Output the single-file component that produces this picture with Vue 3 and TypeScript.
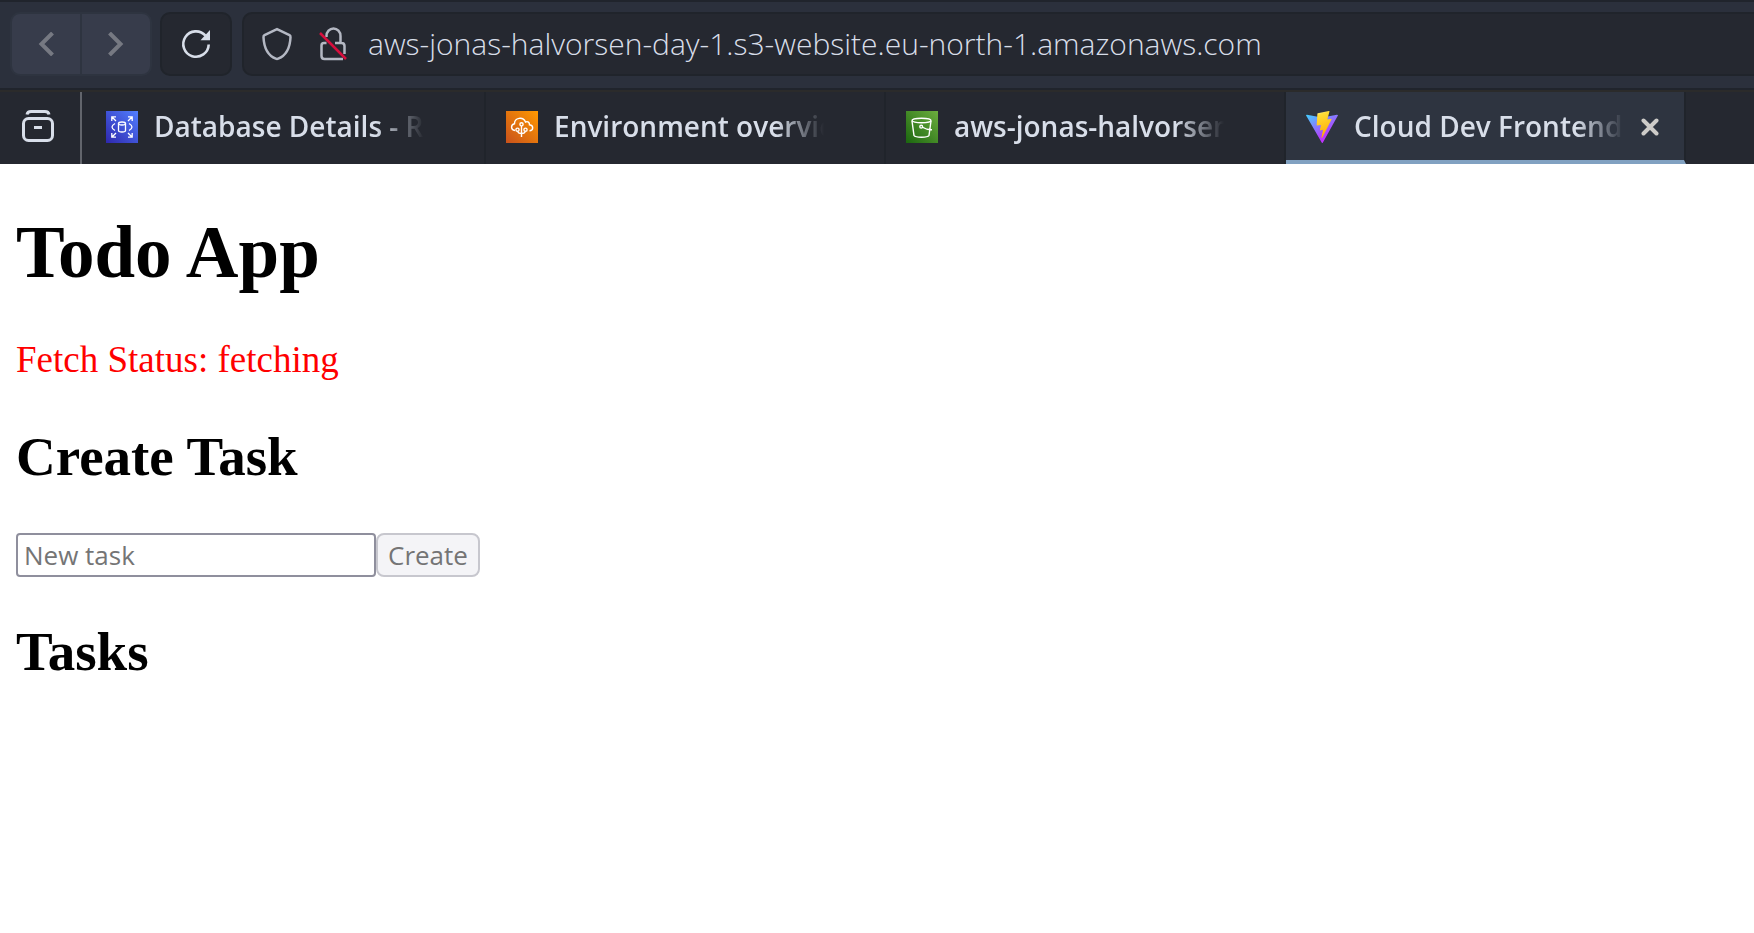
<script setup lang="ts">
import { ref } from 'vue'

interface Tab {
  id: string
  title: string
}

const tabs: Tab[] = [
  { id: 'database', title: 'Database Details - RDS' },
  { id: 'environment', title: 'Environment overview' },
  { id: 'bucket', title: 'aws-jonas-halvorsen' },
  { id: 'frontend', title: 'Cloud Dev Frontend' },
]

const activeTab = ref('frontend')
const address = ref('aws-jonas-halvorsen-day-1.s3-website.eu-north-1.amazonaws.com')
const newTask = ref('')
const fetchStatus = ref('fetching')
</script>

<template>
  <div class="browser">
    <header class="toolbar">
      <div class="history">
        <button type="button" class="history-button" aria-label="Back" disabled>
          <svg width="16" height="24" viewBox="0 0 16 24"><path d="M14.500 1 3.500 12l11 11" /></svg>
        </button>
        <button type="button" class="history-button" aria-label="Forward" disabled>
          <svg width="16" height="24" viewBox="0 0 16 24"><path d="m1.500 1 11 11-11 11" /></svg>
        </button>
      </div>
      <button type="button" class="reload" aria-label="Reload">
        <svg width="32" height="32" viewBox="0 0 32 32">
          <path d="M28.700 16.500A12.700 12.700 0 1 1 25.500 7.600" fill="none" stroke="#d8dee9" stroke-width="2.600" />
          <path d="M30 2v10.300h-9.500z" fill="#d8dee9" />
        </svg>
      </button>
      <div class="address-bar">
        <svg class="shield" width="32" height="34" viewBox="0 0 32 34">
          <path d="M16 2.200 28.500 8.200Q29.600 8.800 29.500 10.200C29 21 25 28.500 17.200 31.700Q16 32.200 14.800 31.700C7 28.500 3 21 2.500 10.200Q2.400 8.800 3.500 8.200Z" />
        </svg>
        <svg class="lock" width="30" height="34" viewBox="0 0 30 34">
          <path d="M8.500 10v-1a6.500 7 0 0 1 14 0v7M17 16h6.500q3 0 3 3v8M8.500 16H6q-2.500 0-2.500 2.500V29q0 3 3 3H25" />
          <path class="slash" d="m2 6 26 26" />
        </svg>
        <input v-model="address" class="address" type="text" aria-label="Address" spellcheck="false" />
      </div>
    </header>

    <nav class="tab-bar" aria-label="Open tabs">
      <button type="button" class="recent" aria-label="Recent tabs">
        <svg width="36" height="36" viewBox="0 0 36 36" fill="none" stroke="#d8dee9" stroke-width="3">
          <path d="M7 6.500q.5-3 4-3h14q3.500 0 4 3" />
          <rect x="3.500" y="10.500" width="29" height="22" rx="5" />
          <path d="M14 19.500h8" />
        </svg>
      </button>
      <div v-for="tab in tabs" :key="tab.id" class="tab" :class="{ active: tab.id === activeTab }">
        <button type="button" class="tab-button" @click="activeTab = tab.id">
          <svg v-if="tab.id === 'database'" class="favicon" viewBox="0 0 32 32">
            <defs>
              <linearGradient id="blue" x1="0" y1="1" x2="1" y2="0">
                <stop offset="0" stop-color="#2e27ad" /><stop offset="1" stop-color="#527fff" />
              </linearGradient>
            </defs>
            <path d="M0 0h32v32H0z" fill="url(#blue)" />
            <g fill="none" stroke="#fff" stroke-width="1.300">
              <ellipse cx="16" cy="12.500" rx="3.500" ry="1.500" />
              <path d="M12.500 12.500v7c0 2 7 2 7 0v-7M9 12.500q-6 3.500 0 7M23 12.500q6 3.500 0 7M5.800 10V5.800H10M6 6l4 4M22 5.800h4.200V10M26 6l-4 4M5.800 22v4.200H10M6 26l4-4M22 26.200h4.200V22M26 26l-4-4" />
            </g>
          </svg>
          <svg v-else-if="tab.id === 'environment'" class="favicon" viewBox="0 0 32 32">
            <defs>
              <linearGradient id="orange" x1="0" y1="1" x2="1" y2="0">
                <stop offset="0" stop-color="#c8511b" /><stop offset="1" stop-color="#ff9900" />
              </linearGradient>
            </defs>
            <path d="M0 0h32v32H0z" fill="url(#orange)" />
            <g fill="none" stroke="#fff" stroke-width="1.400">
              <path d="M9 19.500C4.500 19 4.500 13.500 8.500 12.700 8.500 6.500 17 5.300 19.500 11c2.500-1.200 4 .5 4 2.800 4.500.7 4 5.700 0 5.900" />
              <path d="M15.500 15v11M12 20.500q0 2 3.500 2M19 20.500q0 2-3.500 2" />
              <circle cx="15.500" cy="13.300" r="1.600" /><circle cx="11.500" cy="18.700" r="1.600" /><circle cx="19.500" cy="18.700" r="1.600" />
            </g>
          </svg>
          <svg v-else-if="tab.id === 'bucket'" class="favicon" viewBox="0 0 32 32">
            <defs>
              <linearGradient id="green" x1="0" y1="1" x2="1" y2="0">
                <stop offset="0" stop-color="#1b660f" /><stop offset="1" stop-color="#6cae3e" />
              </linearGradient>
            </defs>
            <path d="M0 0h32v32H0z" fill="url(#green)" />
            <g fill="none" stroke="#fff" stroke-width="1.400">
              <ellipse cx="15.500" cy="9.500" rx="9.500" ry="2.300" />
              <path d="m6 10 2 14.500q1 1.700 7.500 1.700t7.500-1.700L25 10M16 16q5 3 10 2.700" />
              <circle cx="15.200" cy="15.700" r="1.400" />
            </g>
          </svg>
          <svg v-else class="favicon" viewBox="0 0 32 32">
            <defs>
              <linearGradient id="violet" x1="0" y1="0" x2=".55" y2=".8">
                <stop offset="0" stop-color="#41d1ff" /><stop offset="1" stop-color="#bd34fe" />
              </linearGradient>
              <linearGradient id="bolt" x1=".4" y1="0" x2=".6" y2="1">
                <stop offset="0" stop-color="#ffea83" /><stop offset=".1" stop-color="#ffdd35" /><stop offset="1" stop-color="#ffa800" />
              </linearGradient>
            </defs>
            <path d="M31.900 4.600 16.900 31.500q-.6 1-1.200 0L.1 4.600q-.4-1 .8-.9L16 6.400l15-2.700q1.200 0 .9.900z" fill="url(#violet)" />
            <path d="m22.900.1-11.100 2.100q-.4.100-.4.400l-.7 11.500q0 .6.600.5l3.100-.7q.5 0 .5.500l-1 4.500q0 .6.600.5l1.900-.6q.6 0 .5.600l-1.400 7c-.1.500.5.700.7.300L25.500 8.400q.2-.6-.4-.6l-3.200.6q-.5 0-.4-.6l2-7.200q.1-.6-.6-.5z" fill="url(#bolt)" />
          </svg>
          <span class="tab-title">{{ tab.title }}</span>
        </button>
        <button v-if="tab.id === activeTab" type="button" class="close" aria-label="Close tab">
          <svg width="18" height="18" viewBox="0 0 18 18"><path d="m2.500 2.500 13 13m0-13-13 13" /></svg>
        </button>
      </div>
    </nav>

    <main class="page">
      <h1>Todo App</h1>
      <p class="status">Fetch Status: {{ fetchStatus }}</p>
      <h2>Create Task</h2>
      <form class="create" @submit.prevent>
        <input v-model="newTask" type="text" placeholder="New task" aria-label="New task" />
        <button type="submit" :disabled="!newTask">Create</button>
      </form>
      <h2>Tasks</h2>
    </main>
  </div>
</template>

<style>
body {
  margin: 0;
  background: #fff;
}
</style>

<style scoped>
.browser {
  color: #000;
  font-family: "Liberation Serif", serif;
}

.browser * {
  box-sizing: border-box;
}

button,
input {
  margin: 0;
  padding: 0;
  border: 0;
  background: none;
  font-family: "Open Sans", sans-serif;
}

svg {
  display: block;
  flex: none;
}

.toolbar {
  display: flex;
  gap: 8px;
  height: 90px;
  padding: 10px 0 12px 10px;
  border-top: 2px solid #20242c;
  border-bottom: 2px solid #20242c;
  background: #2b303c;
}

.history {
  display: flex;
  flex: none;
  width: 142px;
  border: 2px solid #2e3440;
  border-radius: 10px;
  background: #373c4b;
  overflow: hidden;
}

.history-button {
  display: grid;
  flex: 1;
  place-items: center;
}

.history-button + .history-button {
  border-left: 2px solid #2e3440;
}

.history-button path {
  fill: none;
  stroke: #767982;
  stroke-width: 4;
}

.reload {
  display: grid;
  flex: none;
  place-items: center;
  width: 72px;
  border: 2px solid #20242b;
  border-radius: 10px;
  background: #252830;
}

.address-bar {
  display: flex;
  flex: 1;
  align-items: center;
  min-width: 0;
  margin-left: 2px;
  padding-left: 17px;
  border: 2px solid #20242b;
  border-right: 0;
  border-radius: 10px 0 0 10px;
  background: #252830;
}

.shield path,
.lock path {
  fill: none;
  stroke: #b4b8c3;
  stroke-width: 2.500;
}

.lock {
  margin: 0 20px 0 25px;
}

.lock .slash {
  stroke: #d70f3d;
}

.address {
  flex: 1;
  min-width: 0;
  color: #d8dee9;
  font-size: 30px;
  font-weight: 300;
  line-height: 40px;
  outline: 0;
}

.tab-bar {
  display: flex;
  height: 74px;
  border-top: 2px solid #2b2b2b;
  background: #252830;
}

.recent {
  display: grid;
  flex: none;
  place-items: center;
  width: 82px;
  margin-right: 4px;
  padding: 0 4px 4px 0;
  border-right: 2px solid #62656c;
}

.tab {
  display: flex;
  flex: 0 1 400px;
  min-width: 0;
  padding: 0 20px;
  border-right: 2px solid #20242b;
}

.tab.active {
  border-bottom: 4px solid #81a1c1;
  background: #2e3440;
}

.tab-button {
  display: flex;
  flex: 1;
  gap: 16px;
  align-items: center;
  height: 70px;
  min-width: 0;
  text-align: left;
}

.favicon {
  width: 32px;
  height: 32px;
}

.tab-title {
  flex: 0 1 270px;
  min-width: 0;
  padding-bottom: 2px;
  overflow: hidden;
  color: #d8dee9;
  font-size: 28px;
  font-weight: 600;
  line-height: 40px;
  white-space: nowrap;
  mask-image: linear-gradient(to left, transparent, #000 48px);
}

.close {
  flex: none;
  align-self: center;
  width: 18px;
  margin: 2px 5px 0 14px;
}

.close path {
  stroke: #cdcbc8;
  stroke-linecap: round;
  stroke-width: 4;
}

.page {
  padding: 46px 16px;
}

h1 {
  margin: 0 0 42px;
  font-size: 73px;
  line-height: 86px;
}

.status {
  margin: 0 0 42px;
  color: #f00;
  font-size: 37px;
  line-height: 44px;
}

h2 {
  margin: 0;
  font-size: 55px;
  line-height: 66px;
}

.create {
  display: flex;
  margin: 43px 0 42px;
}

.create input {
  width: 360px;
  height: 44px;
  padding: 0 6px;
  border: 2px solid #8f8f9d;
  border-radius: 4px;
  background: #fff;
  font-size: 26px;
}

.create input::placeholder {
  color: #757575;
}

.create button {
  height: 44px;
  padding: 0 10px;
  border: 2px solid #c7c7ce;
  border-radius: 8px;
  background: #f4f4f7;
  color: #747475;
  font-size: 26px;
  line-height: 40px;
}
</style>
